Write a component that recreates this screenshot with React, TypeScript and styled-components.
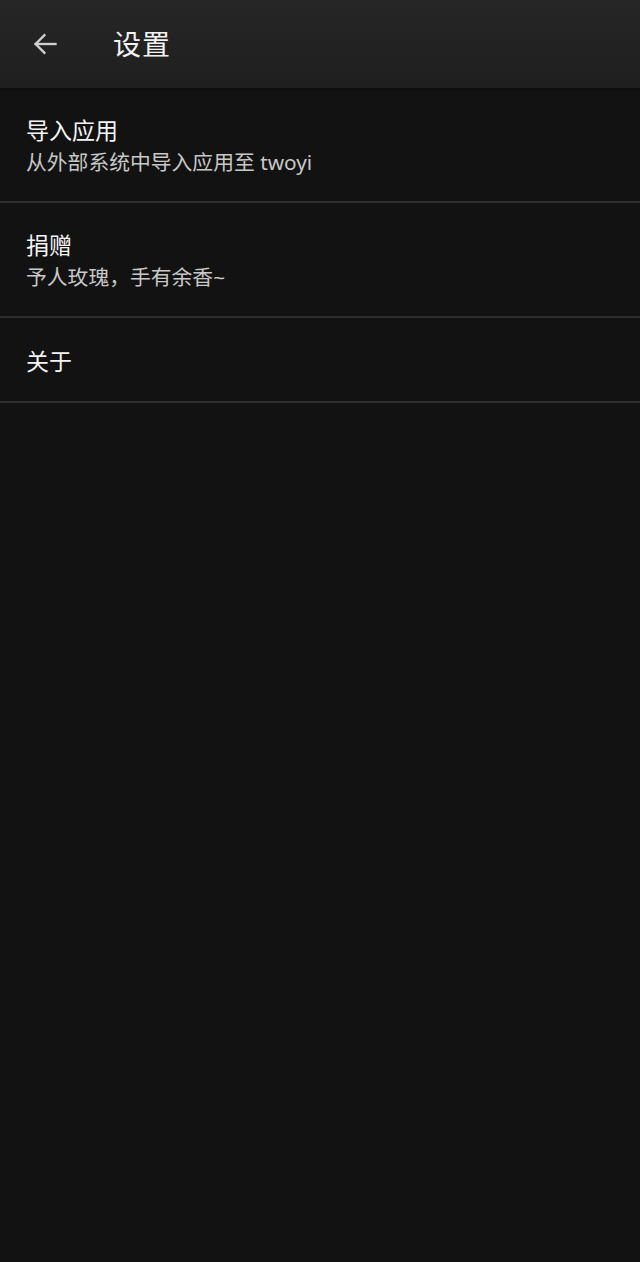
import styled, { createGlobalStyle } from 'styled-components';

const GlobalStyle = createGlobalStyle`
	html, body {
		margin: 0;
		padding: 0;
		background: #121212;
	}
	body {
		font-family: 'Noto Sans', 'Noto Sans CJK SC', sans-serif;
	}
`;

interface SettingItem {
	title: string;
	summary?: string;
}

const items: SettingItem[] = [
	{ title: '导入应用', summary: '从外部系统中导入应用至 twoyi' },
	{ title: '捐赠', summary: '予人玫瑰，手有余香~' },
	{ title: '关于' },
];

const BackIcon = () => (
	<svg width="28" height="28" viewBox="0 0 24 24" fill="none" stroke="#d0d0d0" strokeWidth="2" strokeLinecap="square">
		<path d="M21 12H4" />
		<path d="M11.5 4.5L4 12l7.5 7.5" />
	</svg>
);

export default function App() {
	return (
		<>
			<GlobalStyle />
			<Screen>
				<AppBar>
					<BackButton>
						<BackIcon />
					</BackButton>
					<Title>设置</Title>
				</AppBar>
				<List>
					{items.map((item) => (
						<Row key={item.title} $tall={!!item.summary}>
							<RowTitle>{item.title}</RowTitle>
							{item.summary && <RowSummary>{item.summary}</RowSummary>}
						</Row>
					))}
				</List>
			</Screen>
		</>
	);
}

const Screen = styled.div`
	width: 640px;
	min-height: 1262px;
	background: #121212;
	display: flex;
	flex-direction: column;
`;

const AppBar = styled.header`
	height: 88px;
	background: linear-gradient(180deg, #262626 0%, #1f1f1f 100%);
	box-shadow: 0 2px 3px rgba(0, 0, 0, 0.35);
	display: flex;
	align-items: center;
	padding-left: 30px;
	gap: 53px;
	position: relative;
	z-index: 1;
`;

const BackButton = styled.button`
	width: 30px;
	height: 30px;
	padding: 0;
	border: none;
	background: transparent;
	display: flex;
	align-items: center;
	justify-content: center;
`;

const Title = styled.h1`
	margin: 0;
	font-size: 28px;
	font-weight: 400;
	color: #f2f2f2;
	letter-spacing: 1px;
	margin-top: -2px;
`;

const List = styled.div`
	display: flex;
	flex-direction: column;
`;

const Row = styled.div<{ $tall: boolean }>`
	box-sizing: border-box;
	height: ${(p) => (p.$tall ? '115px' : '85px')};
	padding: 3px 26px 0;
	display: flex;
	flex-direction: column;
	justify-content: center;
	gap: 2px;
	border-bottom: 2px solid #2e2e2e;
`;

const RowTitle = styled.div`
	font-size: 23px;
	line-height: 30px;
	color: #f4f4f4;
	font-weight: 400;
`;

const RowSummary = styled.div`
	font-size: 20.8px;
	line-height: 30px;
	color: #c8c8c8;
`;
